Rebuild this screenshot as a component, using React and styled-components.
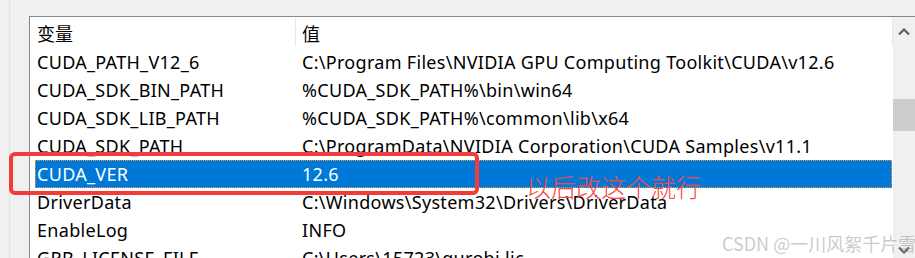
import React from "react";
import styled, { createGlobalStyle } from "styled-components";

const Global = createGlobalStyle`
  html, body { margin: 0; padding: 0; background: #f0f0f0; overflow: hidden; }
  #root { width: 915px; height: 258px; }
`;

const Frame = styled.div`
  position: relative;
  width: 915px;
  height: 258px;
  overflow: hidden;
  background: #f0f0f0;
  padding-left: 9px;
  box-sizing: border-box;
  display: flex;
  font-family: "Noto Sans", "Noto Sans CJK SC", sans-serif;
`;

const Panel = styled.div`
  flex: 1;
  border-left: 1px solid #e2e2e2;
  padding: 16px 0 0 19px;
  display: flex;
  flex-direction: column;
`;

const ListView = styled.div`
  flex: 1;
  border-top: 1px solid #828790;
  border-left: 1px solid #828790;
  background: #fff;
  display: flex;
  min-height: 0;
`;

const Table = styled.div`
  flex: 1;
  display: flex;
  flex-direction: column;
`;

const HeaderRow = styled.div`
  flex-shrink: 0;
  height: 31px;
  display: grid;
  grid-template-columns: 266px 1fr;
  align-items: stretch;
`;

const HeaderCell = styled.div`
  position: relative;
  display: flex;
  align-items: center;
  padding-left: ${(p) => p.$pad}px;
  font-family: "Noto Sans CJK SC", sans-serif;
  font-size: 18px;
  color: #000;
  border-right: 1px solid transparent;
  &::after {
    content: "";
    position: absolute;
    right: -1px;
    top: 1px;
    bottom: 2px;
    width: 1px;
    background: #e5e5e5;
  }
`;

const Row = styled.div`
  flex-shrink: 0;
  height: 28px;
  margin-left: 5px;
  margin-right: 1px;
  display: grid;
  grid-template-columns: 261px 1fr;
  align-items: center;
  font-size: 18px;
  letter-spacing: 0.3px;
  white-space: nowrap;
  box-sizing: border-box;
  color: ${(p) => (p.$selected ? "#fff" : "#000")};
  background: ${(p) => (p.$selected ? "#0078d7" : "transparent")};
  outline: ${(p) => (p.$selected ? "1px dotted #f39a3c" : "none")};
  outline-offset: -1px;
`;

const Cell = styled.div`
  padding-left: ${(p) => p.$pad}px;
  overflow: hidden;
`;

const Scrollbar = styled.div`
  width: 22px;
  background: #f0f0f0;
  display: flex;
  flex-direction: column;
  align-items: center;
`;

const ArrowBox = styled.div`
  flex-shrink: 0;
  height: ${(p) => p.$h}px;
  padding-top: ${(p) => p.$top}px;
  box-sizing: border-box;
  display: flex;
  align-items: flex-start;
  justify-content: center;
  width: 100%;
`;

const Track = styled.div`
  width: 100%;
  padding-top: 52px;
  flex: 1;
`;

const Thumb = styled.div`
  width: 100%;
  height: 32px;
  background: #cdcdcd;
`;

const Annotation = styled.div`
  position: absolute;
  left: 9px;
  top: 152px;
  width: 470px;
  height: 43px;
  box-sizing: border-box;
  border: 4px solid #f23c3c;
  border-radius: 6px;
`;

const Note = styled.div`
  position: absolute;
  left: 526px;
  top: 170px;
  font-family: "Noto Sans CJK SC", sans-serif;
  font-size: 25px;
  line-height: 32px;
  font-weight: 300;
  color: #fa4646;
  white-space: nowrap;
`;

const Watermark = styled.div`
  position: absolute;
  left: 722px;
  top: 231px;
  font-family: "Noto Sans CJK SC", sans-serif;
  font-size: 18px;
  line-height: 24px;
  color: rgba(150, 150, 150, 0.5);
  white-space: nowrap;
`;

const Chevron = ({ down }) => (
  <svg width="12" height="8" viewBox="0 0 12 8">
    <path
      d={down ? "M1 1.5 L6 6.5 L11 1.5" : "M1 6.5 L6 1.5 L11 6.5"}
      fill="none"
      stroke="#606060"
      strokeWidth="2.2"
    />
  </svg>
);

const rows = [
  ["CUDA_PATH_V12_6", "C:\\Program Files\\NVIDIA GPU Computing Toolkit\\CUDA\\v12.6"],
  ["CUDA_SDK_BIN_PATH", "%CUDA_SDK_PATH%\\bin\\win64"],
  ["CUDA_SDK_LIB_PATH", "%CUDA_SDK_PATH%\\common\\lib\\x64"],
  ["CUDA_SDK_PATH", "C:\\ProgramData\\NVIDIA Corporation\\CUDA Samples\\v11.1"],
  ["CUDA_VER", "12.6", true],
  ["DriverData", "C:\\Windows\\System32\\Drivers\\DriverData"],
  ["EnableLog", "INFO"],
  ["GRB_LICENSE_FILE", "C:\\Users\\15723\\gurobi.lic"],
];

export default function App() {
  return (
    <>
      <Global />
      <Frame>
        <Panel>
          <ListView>
            <Table>
              <HeaderRow>
                <HeaderCell $pad={7}>变量</HeaderCell>
                <HeaderCell $pad={6}>值</HeaderCell>
              </HeaderRow>
              {rows.map(([name, value, sel]) => (
                <Row key={name} $selected={sel}>
                  <Cell $pad={2}>{name}</Cell>
                  <Cell $pad={6}>{value}</Cell>
                </Row>
              ))}
            </Table>
            <Scrollbar>
              <ArrowBox $h={30} $top={11}>
                <Chevron />
              </ArrowBox>
              <Track>
                <Thumb />
              </Track>
              <ArrowBox $h={16} $top={4}>
                <Chevron down />
              </ArrowBox>
            </Scrollbar>
          </ListView>
        </Panel>
        <Annotation />
        <Note>以后改这个就行</Note>
        <Watermark>CSDN @一川风絮千片雪</Watermark>
      </Frame>
    </>
  );
}
